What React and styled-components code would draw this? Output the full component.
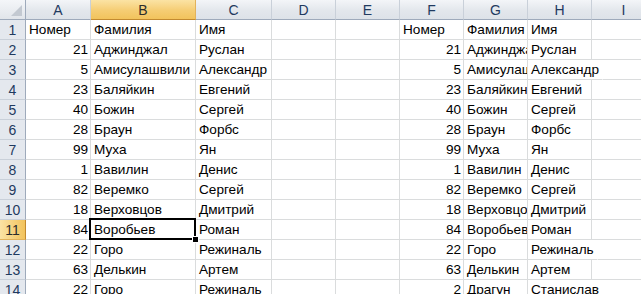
import React from "react";
import styled, { createGlobalStyle } from "styled-components";

const GlobalStyle = createGlobalStyle`
  html, body {
    margin: 0;
    padding: 0;
    background: #fff;
  }
`;

const columns = [
  { name: "A", width: 65 },
  { name: "B", width: 105 },
  { name: "C", width: 76 },
  { name: "D", width: 64 },
  { name: "E", width: 64 },
  { name: "F", width: 64 },
  { name: "G", width: 64 },
  { name: "H", width: 64 },
  { name: "I", width: 64 },
];

const people = [
  [21, "Аджинджал", "Руслан"],
  [5, "Амисулашвили", "Александр"],
  [23, "Баляйкин", "Евгений"],
  [40, "Божин", "Сергей"],
  [28, "Браун", "Форбс"],
  [99, "Муха", "Ян"],
  [1, "Вавилин", "Денис"],
  [82, "Веремко", "Сергей"],
  [18, "Верховцов", "Дмитрий"],
  [84, "Воробьев", "Роман"],
  [22, "Горо", "Режиналь"],
  [63, "Делькин", "Артем"],
];

const rows = [
  ["Номер", "Фамилия", "Имя", "", "", "Номер", "Фамилия", "Имя", ""],
  ...people.map((p) => [...p, "", "", ...p, ""]),
  [22, "Горо", "Режиналь", "", "", 2, "Драгун", "Станислав", ""],
];

// names too long for column H spill into the empty column I
const spills = ["Александр", "Режиналь", "Станислав"];

const SELECTED_COL = 1;
const SELECTED_ROW = 10;

const Sheet = styled.div`
  width: 641px;
  height: 294px;
  overflow: hidden;
  background: #fff;
  font-family: "Liberation Sans", Arial, sans-serif;
  font-size: 13.6px;
  color: #000;
`;

const Row = styled.div`
  display: flex;
  height: 20px;
`;

const Corner = styled.div`
  flex: 0 0 26px;
  box-sizing: border-box;
  height: 20px;
  position: relative;
  background: linear-gradient(#f4f6f9, #e1e5ea);
  border-right: 1px solid #9eaabb;
  border-bottom: 1px solid #9eaabb;
`;

const CornerMark = styled.svg`
  position: absolute;
  right: 3px;
  bottom: 3px;
`;

const ColHead = styled.div`
  flex: 0 0 ${({ $w }) => $w}px;
  box-sizing: border-box;
  height: 20px;
  display: flex;
  align-items: center;
  justify-content: center;
  font-size: 14px;
  color: ${({ $active }) => ($active ? "#2c2c2c" : "#1f3a5f")};
  background: ${({ $active }) =>
    $active
      ? "linear-gradient(#fbe3a4, #f5cd74 55%, #f2c35c)"
      : "linear-gradient(#f3f5f8, #e3e7ec 55%, #dde2e8)"};
  border-right: 1px solid ${({ $active }) => ($active ? "#e2b25b" : "#c9d0d9")};
  border-bottom: 1px solid ${({ $active }) => ($active ? "#c28a30" : "#9eaabb")};
`;

const RowHead = styled.div`
  flex: 0 0 26px;
  box-sizing: border-box;
  height: 20px;
  display: flex;
  align-items: center;
  justify-content: center;
  font-size: 14px;
  color: ${({ $active }) => ($active ? "#2c2c2c" : "#1f3a5f")};
  background: ${({ $active }) =>
    $active ? "linear-gradient(90deg, #fbe3a4, #f2c35c)" : "#e4e8ee"};
  border-right: 1px solid ${({ $active }) => ($active ? "#c28a30" : "#9eaabb")};
  border-bottom: 1px solid ${({ $active }) => ($active ? "#e2b25b" : "#c9d0d9")};
`;

const Cell = styled.div`
  flex: 0 0 ${({ $w }) => $w}px;
  box-sizing: border-box;
  height: 20px;
  line-height: 20px;
  padding: 0 ${({ $num }) => ($num ? "2px" : "3px")};
  text-align: ${({ $num }) => ($num ? "right" : "left")};
  white-space: nowrap;
  overflow: ${({ $open, $sel }) => ($open || $sel ? "visible" : "hidden")};
  position: relative;
  z-index: ${({ $open, $sel }) => ($sel ? 2 : $open ? 1 : 0)};
  border-bottom: 1px solid #dadcdd;
  border-right: 1px solid ${({ $open }) => ($open ? "transparent" : "#dadcdd")};
`;

const Selection = styled.div`
  position: absolute;
  left: -2px;
  top: -2px;
  right: -1px;
  bottom: -1px;
  border: 2px solid #000;
  pointer-events: none;
`;

const FillHandle = styled.div`
  position: absolute;
  right: -5px;
  bottom: -5px;
  width: 5px;
  height: 5px;
  background: #000;
  border: 1px solid #fff;
`;

const App = () => {
  return (
    <>
      <GlobalStyle />
      <Sheet>
        <Row>
          <Corner>
            <CornerMark width="11" height="11" viewBox="0 0 11 11">
              <polygon points="11,0 11,11 0,11" fill="#c3c9d1" />
            </CornerMark>
          </Corner>
          {columns.map((c, i) => (
            <ColHead key={c.name} $w={c.width} $active={i === SELECTED_COL}>
              {c.name}
            </ColHead>
          ))}
        </Row>
        {rows.map((r, ri) => (
          <Row key={ri}>
            <RowHead $active={ri === SELECTED_ROW}>{ri + 1}</RowHead>
            {columns.map((c, ci) => {
              const v = r[ci];
              const selected = ri === SELECTED_ROW && ci === SELECTED_COL;
              const open = ci === 7 && spills.includes(v);
              return (
                <Cell
                  key={c.name}
                  $w={c.width}
                  $num={typeof v === "number"}
                  $open={open}
                  $sel={selected}
                >
                  {v}
                  {selected && (
                    <Selection>
                      <FillHandle />
                    </Selection>
                  )}
                </Cell>
              );
            })}
          </Row>
        ))}
      </Sheet>
    </>
  );
};

export default App;
